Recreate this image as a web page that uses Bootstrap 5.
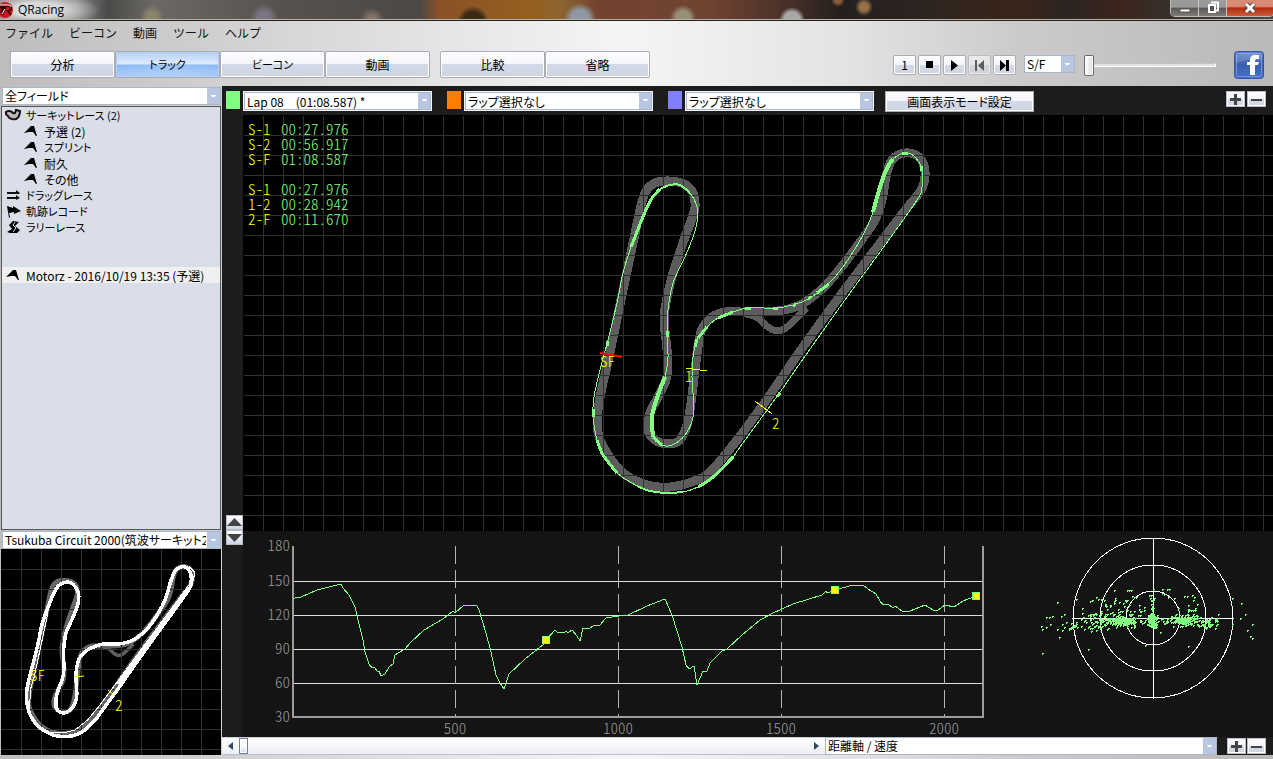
<!DOCTYPE html>
<html lang="ja">
<head>
<meta charset="utf-8">
<meta name="viewport" content="width=device-width, initial-scale=1">
<title>QRacing</title>
<link href="https://cdn.jsdelivr.net/npm/bootstrap@5.3.0/dist/css/bootstrap.min.css" rel="stylesheet">
<style>
  body { font-family: "Noto Sans CJK JP", sans-serif; font-size: 12px; line-height: 16px; color: #000; overflow: hidden;
    background: linear-gradient(90deg, #bdbdbd 0, #cfcfcf 16%, #e4e4e4 34%, #f5f5f5 49%, #e4e4e4 66%, #cbcbcb 80%, #b9b9b9 100%); }
  .tree, .drop, .bevel { font-feature-settings: "palt"; }

  /* window frame */
  .titlebar { height: 21px; border-bottom: 1px solid #24201c; box-shadow: inset 0 -1px #b5b0a8; overflow: hidden;
    background:
      radial-gradient(ellipse 62px 18px at 38px 10px, #d8d8d8 40%, transparent),
      radial-gradient(circle at 152px 17px, #8f866a 0 4px, transparent 12px),
      radial-gradient(circle at 264px 18px, #7b7585 0 6px, transparent 14px),
      radial-gradient(circle at 372px 20px, #85756a 0 4px, transparent 12px),
      radial-gradient(circle at 580px 19px, #8f98a4 0 9px, transparent 16px),
      radial-gradient(circle at 683px 18px, #989078 0 7px, transparent 13px),
      radial-gradient(circle at 792px 20px, #aaa8a6 0 8px, transparent 13px),
      radial-gradient(circle at 864px 7px, #96714a 0 4px, transparent 9px),
      radial-gradient(circle at 838px 0px, #8a5a3a 0 3px, transparent 7px),
      radial-gradient(circle at 473px 22px, #3a2a14 0 10px, transparent 16px),
      linear-gradient(90deg, #777 0, #858381 6%, #4c4a48 8.5%, #6b6966 12%, #57524d 22%, #4c4845 33%, #8a5226 34.5%, #96601f 42%, #8c6430 44%, #72442f 47%, #704232 56%, #463028 62%, #241f1d 66%, #2c2420 72%, #3a2519 80%, #2b2522 84%, #3d241c 88%, #35302c 92%, #4a4744 100%); }
  .win-title { font-family: "Open Sans", "Noto Sans", sans-serif; font-size: 12px; line-height: 19px; }
  .winctl { height: 17px; border: 1px solid #bdb9b6; border-top: 0; border-radius: 0 0 5px 5px; overflow: hidden; margin-right: -1px; }
  .winctl button { border: 0; padding: 0; width: 28px; height: 16px; line-height: 0; background: linear-gradient(#9a9a9a 0 45%, #5a5856 50%, #807c78); border-right: 1px solid #c9c6c3; }
  .winctl .quit { width: 46px; background: linear-gradient(#d98a74 0 40%, #b02c10 50%, #cf5a3a); border: 0; }

  .menubar { height: 25px; padding: 0 5px; gap: 16px; }
  .menubar a { color: #111; text-decoration: none; line-height: 24px; }
  .toolbar { height: 40px; padding: 5px 9px 0 10px; }

  /* beveled controls */
  .bevel { border: 1px solid #a9abb5; border-radius: 2px; padding: 0; box-shadow: inset 0 0 0 1px #fff; color: #000; font-size: 12px;
    background: linear-gradient(#fcfdff, #f3f5fb 48%, #d3d9e7 50%, #cfd5e2); }
  .tabbtn { width: 105px; height: 27px; line-height: 23px; }
  .tabbtn.kana { font-size: 11px; }
  .tabbtn.on { box-shadow: inset 0 0 0 1px #b5cdf0; background: radial-gradient(ellipse 60px 16px at 50% 100%, #b5d9ff99, transparent), linear-gradient(#b5cff5, #e0eafa 48%, #8fb9f2 52%, #a5cbf8); }
  .second-group { margin-left: 10px; }
  .playbtn { width: 23px; height: 20px; line-height: 16px; display: flex; align-items: center; justify-content: center; }
  .playbtn:disabled { opacity: .55; }
  .zoombtn { width: 19px; height: 16px; display: flex; align-items: center; justify-content: center; border-radius: 0; border-color: #b9bcc6; }
  .modebtn { width: 149px; height: 21px; line-height: 17px; margin-left: 11px; border-radius: 0; }
  .tight { gap: 2px; }
  .seek { gap: 9px; }
  .seek .drop { width: 51px; }
  .seek .rail { width: 132px; }

  .drop { appearance: none; border: 1px solid #acb7c6; border-radius: 0; color: #000; font-size: 12px; line-height: 14px; height: 18px; padding: 0 14px 0 2px; outline: 0; text-overflow: clip; overflow: hidden; white-space: nowrap;
    background:
      linear-gradient(#fff, #fff) right 5px top 8px / 3px 1px no-repeat,
      linear-gradient(#fff, #fff) right 4px top 7px / 5px 1px no-repeat,
      linear-gradient(#b9c6e2, #b9c6e2) right 0 top 0 / 13px 100% no-repeat, #fff; }
  .lapdrop { width: 189px; height: 20px; border: 1px solid #f4f6fa; box-shadow: inset 0 0 0 1px #a9b6ca; padding-left: 3px; line-height: 17px; }
  .graphdrop { width: 392px; }

  input[type=range].rail { appearance: none; background: transparent; margin: 0; padding: 0; display: block; height: 20px; }
  .rail::-webkit-slider-runnable-track { height: 4px; background: #dfe2e0; border: 1px solid #fff; border-top-color: #c4c4c4; border-left: 0; }
  .rail::-webkit-slider-thumb { appearance: none; width: 10px; height: 21px; margin-top: -9px; border: 1px solid #6a6a6a; border-radius: 2px; background: linear-gradient(90deg, #fff, #ddd); box-shadow: inset 0 0 0 1px #fff; }
  input[type=range].pan { appearance: none; background: transparent; margin: 0; padding: 0; height: 16px; display: block; min-width: 0; }
  .pan::-webkit-slider-runnable-track { height: 16px; }
  .pan::-webkit-slider-thumb { appearance: none; width: 9px; height: 16px; border: 1px solid #6f7f9b; background: linear-gradient(#fff 0 45%, #cfd9ec); box-shadow: inset 0 0 0 1px #fff; }

  /* sidebar */
  .side { width: 222px; padding: 1px 1px 0 1px; }
  .side .drop { width: 219px; margin-left: 1px; }
  .tree { background: #dadee8; border: 1px solid #55575b; list-style: none; margin: 1px 0 1px; padding: 0; min-height: 0; overflow: hidden; }
  .tree a { display: flex; align-items: center; height: 16px; line-height: 15px; color: #000; text-decoration: none; padding-left: 3px; gap: 5px; white-space: nowrap; font-size: 12px; }
  .tree a.kana { font-size: 11px; }
  .tree .sub { padding-left: 22px; }
  .tree .picked { background: #f0f0f0; margin-top: 32px; }
  .minimap { height: 206px; background: #000; display: block; width: 100%; }

  /* main view */
  .viewer { background: #1c1c1c; min-width: 0; }
  .lapbar { height: 29px; padding: 5px 7px 0 4px; }
  .swatch { width: 14px; height: 18px; margin-right: 3px; }
  .lapdrop + .swatch { margin-left: 15px; }
  .gutter { width: 21px; padding: 0 0 192px 4px; }
  .split { width: 17px; height: 15px; padding: 0; border: 1px solid #b9bcc6; background: linear-gradient(#fff, #ccd4e5); line-height: 0; display: block; }
  .course { background: #000; min-height: 0; }
  .times { top: 6px; left: 5px; color: #80ff80; line-height: 15px; }
  .hud, .times, .axis { font-family: "Noto Sans CJK JP", sans-serif; font-feature-settings: "hwid"; font-size: 15px; font-weight: 300; }
  .times b { font-weight: 300; color: #ff0; display: inline-block; width: 33px; }
  .graph { height: 206px; background: #141414; }
  .axis text { fill: #999; }
  .axis polyline, .axis path, .crisp { shape-rendering: crispEdges; }
  .panbar { height: 18px; background: linear-gradient(#fff, #eceef2); border-top: 1px solid #ccd0da; border-bottom: 1px solid #b8bfdc; }
  .panbar button { border: 0; background: none; padding: 0; width: 17px; line-height: 0; }
  .graphzoom { gap: 1px; padding: 0 7px 0 10px; }
  .footer-edge { height: 4px; }
</style>
</head>
<body>
<div class="d-flex flex-column vh-100">
  <header>
    <div class="titlebar d-flex justify-content-between align-items-start">
      <div class="d-flex align-items-center">
        <svg width="14" height="19" viewBox="0 0 14 19"><circle cx="5" cy="10" r="8" fill="#d3141c"/><path d="M0 6h8q4 0 3 3-1 2-3 2l3 4M6 7l-4 8M0 8l4 0-4 5" fill="none" stroke="#3a0507" stroke-width="2"/><path d="M0 5h8q3 0 3 2M5 9l-3 5" fill="none" stroke="#fff" stroke-width="1"/></svg>
        <span class="win-title ms-1">QRacing</span>
      </div>
      <div class="winctl d-flex">
        <button type="button" aria-label="最小化"><svg width="12" height="12"><rect x="1" y="7" width="10" height="3" fill="#fff" stroke="#555"/></svg></button>
        <button type="button" aria-label="元に戻す"><svg width="14" height="14"><path d="M5 1.500h7v8h-2" fill="none" stroke="#fff" stroke-width="2"/><rect x="3" y="4" width="6" height="7" fill="#555" stroke="#fff" stroke-width="2"/></svg></button>
        <button type="button" class="quit" aria-label="閉じる"><svg width="12" height="12"><path d="M2 2l8 8M10 2l-8 8" stroke="#544" stroke-width="5"/><path d="M2 2l8 8M10 2l-8 8" stroke="#fff" stroke-width="3"/></svg></button>
      </div>
    </div>
    <nav class="menubar d-flex">
      <a href="#">ファイル</a><a href="#">ビーコン</a><a href="#">動画</a><a href="#">ツール</a><a href="#">ヘルプ</a>
    </nav>
    <div class="toolbar d-flex">
      <div class="d-flex">
        <button type="button" class="bevel tabbtn">分析</button>
        <button type="button" class="bevel tabbtn kana on">トラック</button>
        <button type="button" class="bevel tabbtn kana">ビーコン</button>
        <button type="button" class="bevel tabbtn">動画</button>
      </div>
      <div class="d-flex second-group me-auto">
        <button type="button" class="bevel tabbtn">比較</button>
        <button type="button" class="bevel tabbtn">省略</button>
      </div>
      <div class="d-flex mt-1 me-2 tight">
        <button type="button" class="bevel playbtn">1</button>
        <button type="button" class="bevel playbtn" aria-label="停止"><svg width="8" height="8"><path d="M0 0h7v7H0z"/></svg></button>
        <button type="button" class="bevel playbtn" aria-label="再生"><svg width="7" height="11"><path d="M0 0l7 5.500-7 5.500z"/></svg></button>
        <button type="button" class="bevel playbtn" aria-label="前へ" disabled><svg width="10" height="11"><path d="M0 0h2v11H0zM9 0v11L3 5.500z"/></svg></button>
        <button type="button" class="bevel playbtn" aria-label="次へ"><svg width="10" height="11"><path d="M0 0l6 5.500L0 11zM6 0h3v11H6z"/></svg></button>
      </div>
      <div class="d-flex mt-1 align-items-start seek">
        <select class="drop" aria-label="区間"><option>S/F</option></select>
        <input type="range" class="rail" min="0" max="100" value="0" aria-label="再生位置">
      </div>
      <a href="#" class="ms-3" aria-label="Facebook"><svg width="32" height="28" viewBox="-2 0 32 28" class="d-block"><defs><linearGradient id="fb" x2="0" y2="1"><stop stop-color="#5f83cc"/><stop offset=".5" stop-color="#3a5fae"/><stop offset="1" stop-color="#4a70cc"/></linearGradient></defs><rect x=".5" y=".5" width="29" height="27" rx="3" fill="url(#fb)" stroke="#3457a5"/><rect x="2.500" y="2.500" width="25" height="23" rx="2" fill="none" stroke="#6f93da"/><path d="M2 12Q14 8 28 9V4q0-2-2-2H4Q2 2 2 4z" fill="#fff" opacity=".15"/><path d="M16 24V14h-3v-3h3V9q0-5 5-5h4v4h-2q-2 0-2 2v1h4l-1 3h-3v10z" fill="#fff"/></svg></a>
    </div>
  </header>

  <main class="d-flex flex-grow-1" style="min-height:0">
    <aside class="side d-flex flex-column flex-shrink-0">
      <select class="drop" aria-label="フィールド"><option>全フィールド</option></select>
      <ul class="tree flex-grow-1">
        <li><a href="#" class="kana"><svg width="16" height="14"><path d="M1 4q3-2 6 0 1 2 3 1l1-3 4 1q0 6-4 8Q5 12 3 8L1 6z" fill="#bbb" stroke="#111" stroke-width="2"/><path d="M2 6l2 3 5 3" fill="none" stroke="#d22" stroke-dasharray="1 2"/></svg>サーキットレース (2)</a></li>
        <li><a href="#" class="sub"><svg width="15" height="14"><path d="M0 9l7-7h3l3 10h-1L9 8H5z"/></svg>予選 (2)</a></li>
        <li><a href="#" class="sub kana"><svg width="15" height="14"><path d="M0 9l7-7h3l3 10h-1L9 8H5z"/></svg>スプリント</a></li>
        <li><a href="#" class="sub"><svg width="15" height="14"><path d="M0 9l7-7h3l3 10h-1L9 8H5z"/></svg>耐久</a></li>
        <li><a href="#" class="sub"><svg width="15" height="14"><path d="M0 9l7-7h3l3 10h-1L9 8H5z"/></svg>その他</a></li>
        <li><a href="#" class="kana"><svg width="16" height="14"><path d="M2 4h9V2l4 3-1 1H2zM2 9h9V7l4 3-4 2v-1H2z" fill="#111"/></svg>ドラッグレース</a></li>
        <li><a href="#" class="kana"><svg width="16" height="14"><path d="M2 2l6 2V2l8 5-7 3V8L4 9l1 4-1 1z"/></svg>軌跡レコード</a></li>
        <li><a href="#" class="kana"><svg width="16" height="14"><path d="M8 1l6 1-4 4 5 4-3 3H5L2 12l5-3-3-4z"/><path d="M10 2L8 5l3 3-3 4" fill="none" stroke="#dadee8"/></svg>ラリーレース</a></li>
        <li><a href="#" class="picked"><svg width="16" height="14"><path d="M1 9l7-7h3l3 10h-1l-3-4H6z"/></svg>Motorz - 2016/10/19 13:35 (予選)</a></li>
      </ul>
      <select class="drop" aria-label="コース"><option>Tsukuba Circuit 2000(筑波サーキット2000)</option></select>
      <svg class="minimap" viewBox="1 549 220 206" preserveAspectRatio="xMidYMid slice">
        <defs><pattern id="grid" width="20" height="20" patternUnits="userSpaceOnUse" x="3" y="15"><path d="M0 0h20v1H1v19H0z" fill="#303030"/></pattern></defs>
        <g fill="none" transform="translate(-270 490) scale(.5)" stroke-linejoin="round">
          <path data-line="road" stroke="#686868" stroke-width="10"/><path data-line="bypass" stroke="#606060" stroke-width="7"/>
        </g>
        <path d="M21.500 549v206m20-206v206m20-206v206m20-206v206m20-206v206m20-206v206m20-206v206m20-206v206m20-206v206m20-206v206M1 569.500h220m-220 20h220m-220 20h220m-220 20h220m-220 20h220m-220 20h220m-220 20h220m-220 20h220m-220 20h220m-220 20h220" stroke="#303030"/>
        <g class="crisp" fill="none" transform="translate(-270 490) scale(.5)" stroke="#fff" stroke-linejoin="round">
          <path data-line="lap" stroke-width="7"/>
          <path d="M920 187L740 430 715 460 690 480 670 485 640 484M636 245L620 320 608 375 602 395 598 440M918 153l12 12-4 16" stroke-width="2"/>
          <path d="M918 196L776 388" stroke-width="8"/>
        </g>
        <g class="hud" fill="#ff0"><path d="M74 677l10-1M108 690l7 6" stroke="#ff0"/><text x="30" y="681">SF</text><text x="115" y="711">2</text></g>
      </svg>
    </aside>

    <section class="viewer d-flex flex-column flex-grow-1">
      <div class="lapbar d-flex align-items-start">
        <span class="swatch" style="background:#80ff80"></span>
        <select class="drop lapdrop" aria-label="ラップ 1"><option>Lap 08　(01:08.587) *</option></select>
        <span class="swatch" style="background:#ff8000"></span>
        <select class="drop lapdrop" aria-label="ラップ 2"><option>ラップ選択なし</option></select>
        <span class="swatch" style="background:#8080ff"></span>
        <select class="drop lapdrop" aria-label="ラップ 3"><option>ラップ選択なし</option></select>
        <button type="button" class="bevel modebtn">画面表示モード設定</button>
        <div class="d-flex ms-auto tight">
          <button type="button" class="bevel zoombtn" aria-label="拡大"><svg width="11" height="11"><path d="M0 4h4V0h3v4h4v3H7v4H4V7H0z" fill="#444"/></svg></button>
          <button type="button" class="bevel zoombtn" aria-label="縮小"><svg width="11" height="11"><path d="M0 5h11v2H0z" fill="#444"/></svg></button>
        </div>
      </div>
      <div class="d-flex flex-grow-1" style="min-height:0">
        <div class="gutter d-flex flex-column justify-content-end flex-shrink-0">
          <button type="button" class="split" aria-label="上へ"><svg width="15" height="13"><path d="M0 10L7.500 2 15 10z" fill="#444"/></svg></button>
          <button type="button" class="split" aria-label="下へ"><svg width="15" height="13"><path d="M0 3L7.500 11 15 3z" fill="#444"/></svg></button>
        </div>
        <div class="d-flex flex-column flex-grow-1" style="min-width:0">
          <div class="course flex-grow-1 position-relative">
            <svg class="w-100 h-100 d-block" viewBox="243 115 1030 416" preserveAspectRatio="xMidYMid slice">
              <g class="crisp" fill="none" stroke="#5c5c5c" stroke-linejoin="round"><path data-line="road" stroke-width="9"/><path data-line="bypass" stroke-width="7"/></g>
              <rect x="244" y="116" width="1030" height="416" fill="url(#grid)"/>
              <g class="crisp" fill="none" stroke="#80ff80" id="laps" stroke-linejoin="round"><path data-line="lap"/></g>
              <path d="M600 353l22 4" stroke="red" stroke-width="2"/>
              <path class="crisp" d="M686 368l21 3M755 401l17 13" stroke="#ff0"/>
              <g class="hud" fill="#ff0"><text x="600" y="367">SF</text><text x="685" y="382">1</text><text x="772" y="429">2</text></g>
            </svg>
            <div class="times position-absolute">
              <div><b>S-1</b>00:27.976</div><div><b>S-2</b>00:56.917</div><div><b>S-F</b>01:08.587</div><div>&nbsp;</div>
              <div><b>S-1</b>00:27.976</div><div><b>1-2</b>00:28.942</div><div><b>2-F</b>00:11.670</div>
            </div>
          </div>
          <div class="graph flex-shrink-0">
            <svg class="w-100 h-100 d-block axis" viewBox="243 531 1030 206">
              <path d="M293 581.500h690m-690 34h690m-690 34h690m-690 34h690" stroke="#ddd"/>
              <path d="M455.500 546v171m163-171v171m163-171v171m163-171v171" stroke="#b5b5b5" stroke-dasharray="18 6"/>
              <path d="M293 546v171h690V546" fill="none" stroke="#9c9c9c" stroke-width="2"/>
              <g text-anchor="end"><text x="290" y="551">180</text><text x="290" y="586">150</text><text x="290" y="620">120</text><text x="290" y="654">90</text><text x="290" y="688">60</text><text x="290" y="722">30</text></g>
              <g text-anchor="middle"><text x="455" y="734">500</text><text x="618" y="734">1000</text><text x="781" y="734">1500</text><text x="944" y="734">2000</text></g>
              <polyline fill="none" stroke="#80ff80" points="294,599 296,597 301,597 317,590 341,584 343,588 349,595 355,607 359,624 363,640 365,652 369,664 372,668 374,667 378,672 379,671 381,676 385,674 389,667 393,664 395,655 405,649 411,642 424,630 443,619 453,611 455,613 464,605 477,606 479,610 482,620 486,633 491,652 496,675 500,683 504,689 509,674 525,659 544,644 546,640 555,630 558,633 562,632 564,633 566,631 568,633 572,630 577,636 580,641 583,628 590,628 593,626 600,625 606,618 619,616 628,615 647,606 665,599 672,615 682,647 686,665 689,669 694,666 697,685 703,671 707,671 710,663 722,651 727,649 742,635 760,620 773,613 793,604 822,595 826,591 827,593 835,590 853,585 863,585 868,589 876,594 880,601 883,605 888,604 893,608 895,606 902,611 910,611 925,605 933,610 938,610 945,605 954,607 963,601 976,596"/>
              <path fill="#ff0" stroke="#80ff80" d="M542.500 636.500h7v7h-7zM831.500 586.500h7v7h-7zM972.500 592.500h7v7h-7z"/>
              <g class="crisp" fill="none" stroke="#fff"><circle cx="1153" cy="618" r="80"/><circle cx="1153" cy="618" r="53"/><circle cx="1153" cy="618" r="27"/><path d="M1072 618.500h162M1153.500 538v161"/></g>
              <path id="dots" fill="#80ff80"/>
            </svg>
          </div>
        </div>
      </div>
      <div class="d-flex flex-shrink-0">
        <div class="panbar d-flex align-items-center flex-grow-1">
          <button type="button" aria-label="左へ"><svg width="5" height="8"><path d="M5 0v8L0 4z" fill="#2f4a66"/></svg></button>
          <input type="range" class="pan flex-grow-1" min="0" max="100" value="0" aria-label="距離">
          <button type="button" aria-label="右へ"><svg width="5" height="8"><path d="M0 0v8l5-4z" fill="#2f4a66"/></svg></button>
        </div>
        <select class="drop graphdrop" aria-label="グラフ"><option>距離軸 / 速度</option></select>
        <div class="d-flex align-items-center graphzoom">
          <button type="button" class="bevel zoombtn" aria-label="グラフ拡大"><svg width="11" height="11"><path d="M0 4h4V0h3v4h4v3H7v4H4V7H0z" fill="#444"/></svg></button>
          <button type="button" class="bevel zoombtn" aria-label="グラフ縮小"><svg width="11" height="11"><path d="M0 5h11v2H0z" fill="#444"/></svg></button>
        </div>
      </div>
    </section>
  </main>
  <div class="footer-edge"></div>
</div>

<script src="https://cdn.jsdelivr.net/npm/bootstrap@5.3.0/dist/js/bootstrap.bundle.min.js"></script>
<script>
  const parse = s => s.trim().split(/\s+/).map(p => p.split(',').map(Number));
  const lines = {
    road: parse('641,205 646,191 655,183 669,181 684,184 693,193 695,207 691,221 685,237 673,273 666,303 664,320 666,340 668,363 666,380 658,397 650,413 648,430 655,440 668,444 680,440 687,425 691,403 695,370 699,340 703,327 712,317 725,312 743,312 777,311 800,305 823,288 843,265 863,238 875,220 882,200 886,177 892,160 905,153 919,157 925,172 921,190 903,213 843,292 803,347 765,402 737,440 712,470 697,480 670,487 647,485 623,473 607,453 598,433 598,410 603,383 609,357 623,290 633,243 641,205'),
    bypass: parse('743,313 758,318 768,327 777,331 787,327 807,308'),
    lap: parse('631,247 645,212 652,198 660,189 670,185 680,185 690,193 697,207 697,222 693,237 685,257 673,283 668,310 667,333 668,357 665,377 657,398 652,417 653,437 662,445 672,445 685,435 693,417 693,393 692,377 693,357 698,338 707,327 718,318 733,312 748,308 775,308 793,305 810,298 828,284 843,267 863,235 873,212 880,187 887,168 893,159 905,153 915,157 922,170 922,187 917,200 883,248 850,293 803,359 778,395 740,447 733,457 712,478 698,487 683,492 667,493 650,491 637,486 617,473 603,455 597,440 593,417 594,397 600,370 608,340 617,303 623,273 631,247')
  };
  // Catmull-Rom spline through the points
  function curve(p) {
    let d = 'M' + p[0];
    for (let i = 0; i < p.length - 1; i++) {
      const a = p[i - 1] || p[i], b = p[i], c = p[i + 1], e = p[i + 2] || c;
      d += 'C' + [b[0] + (c[0] - a[0]) / 6, b[1] + (c[1] - a[1]) / 6, c[0] - (e[0] - b[0]) / 6, c[1] - (e[1] - b[1]) / 6, c[0], c[1]];
    }
    return d;
  }
  document.querySelectorAll('[data-line]').forEach(e => e.setAttribute('d', curve(lines[e.dataset.line])));
  const laps = document.getElementById('laps');
  for (const [from, to, w] of [[0, 3, 3], [3, 6, 2], [15, 18, 4], [18, 19, 3], [26, 27, 3], [28, 29, 3], [37, 40, 4], [51, 53, 3], [54, 57, 2], [58, 60, 3]]) {
    laps.insertAdjacentHTML('beforeend', `<path d="${curve(lines.lap.slice(from, to + 1))}" stroke-width="${w}"/>`);
  }
  laps.insertAdjacentHTML('beforeend', '<path d="M667 331v6M697 339l-2 8M745 308h6M773 308h5M793 306l3-2M808 299l3-2M817 293l12-9M902 153h6M921 166l1 5M777 397l3-4M593 409v8M607 346l1-5" stroke-width="3"/>');

  // g-force samples: outliers by position, dense clusters by seed
  let d = '', seed = 7;
  const rnd = () => (seed = (seed * 16807) % 2147483647) / 2147483647;
  const dot = (x, y) => d += `M${Math.round(x)} ${Math.round(y)}h2v1h-1v1h-1z`;
  parse('1057,602 1042,653 1059,637 1041,626 1042,629 1046,617 1049,617 1052,616 1046,627 1050,624 1061,616 1064,614 1057,629 1062,630 1088,649 1145,645 1188,646 1241,603 1245,614 1240,618 1252,624 1247,630 1250,636 1252,638 1232,598 1232,624 1114,590 1127,590 1129,590 1131,590 1153,589 1162,589 1167,589 1169,589 1162,593 1149,595 1164,594 1168,597 1174,598 1184,596 1187,596 1192,595 1194,597 1193,600 1197,604 1082,608 1096,597 1098,599 1101,599 1090,601 1092,600 1076,599 1115,598 1114,603 1105,604 1125,600 1132,596 1134,597 1136,597 1150,598 1154,598 1160,632 1218,614').forEach(p => dot(...p));
  for (const [n, x, y, sx, sy] of [[110, 1118, 620, 15, 6], [60, 1095, 621, 13, 8], [90, 1152, 621, 4, 6], [24, 1152, 609, 1, 14], [80, 1184, 620, 12, 5], [80, 1155, 619, 38, 4], [50, 1208, 622, 10, 5], [30, 1118, 610, 14, 11], [12, 1136, 612, 8, 8], [10, 1191, 610, 10, 6], [16, 1072, 626, 8, 5], [60, 1120, 621, 7, 4], [60, 1183, 621, 6, 3]]) {
    for (let i = 0; i < n; i++) dot(x + (rnd() + rnd() - 1) * sx * 1.400, y + (rnd() + rnd() - 1) * sy * 1.300);
  }
  document.getElementById('dots').setAttribute('d', d);
</script>
</body>
</html>
